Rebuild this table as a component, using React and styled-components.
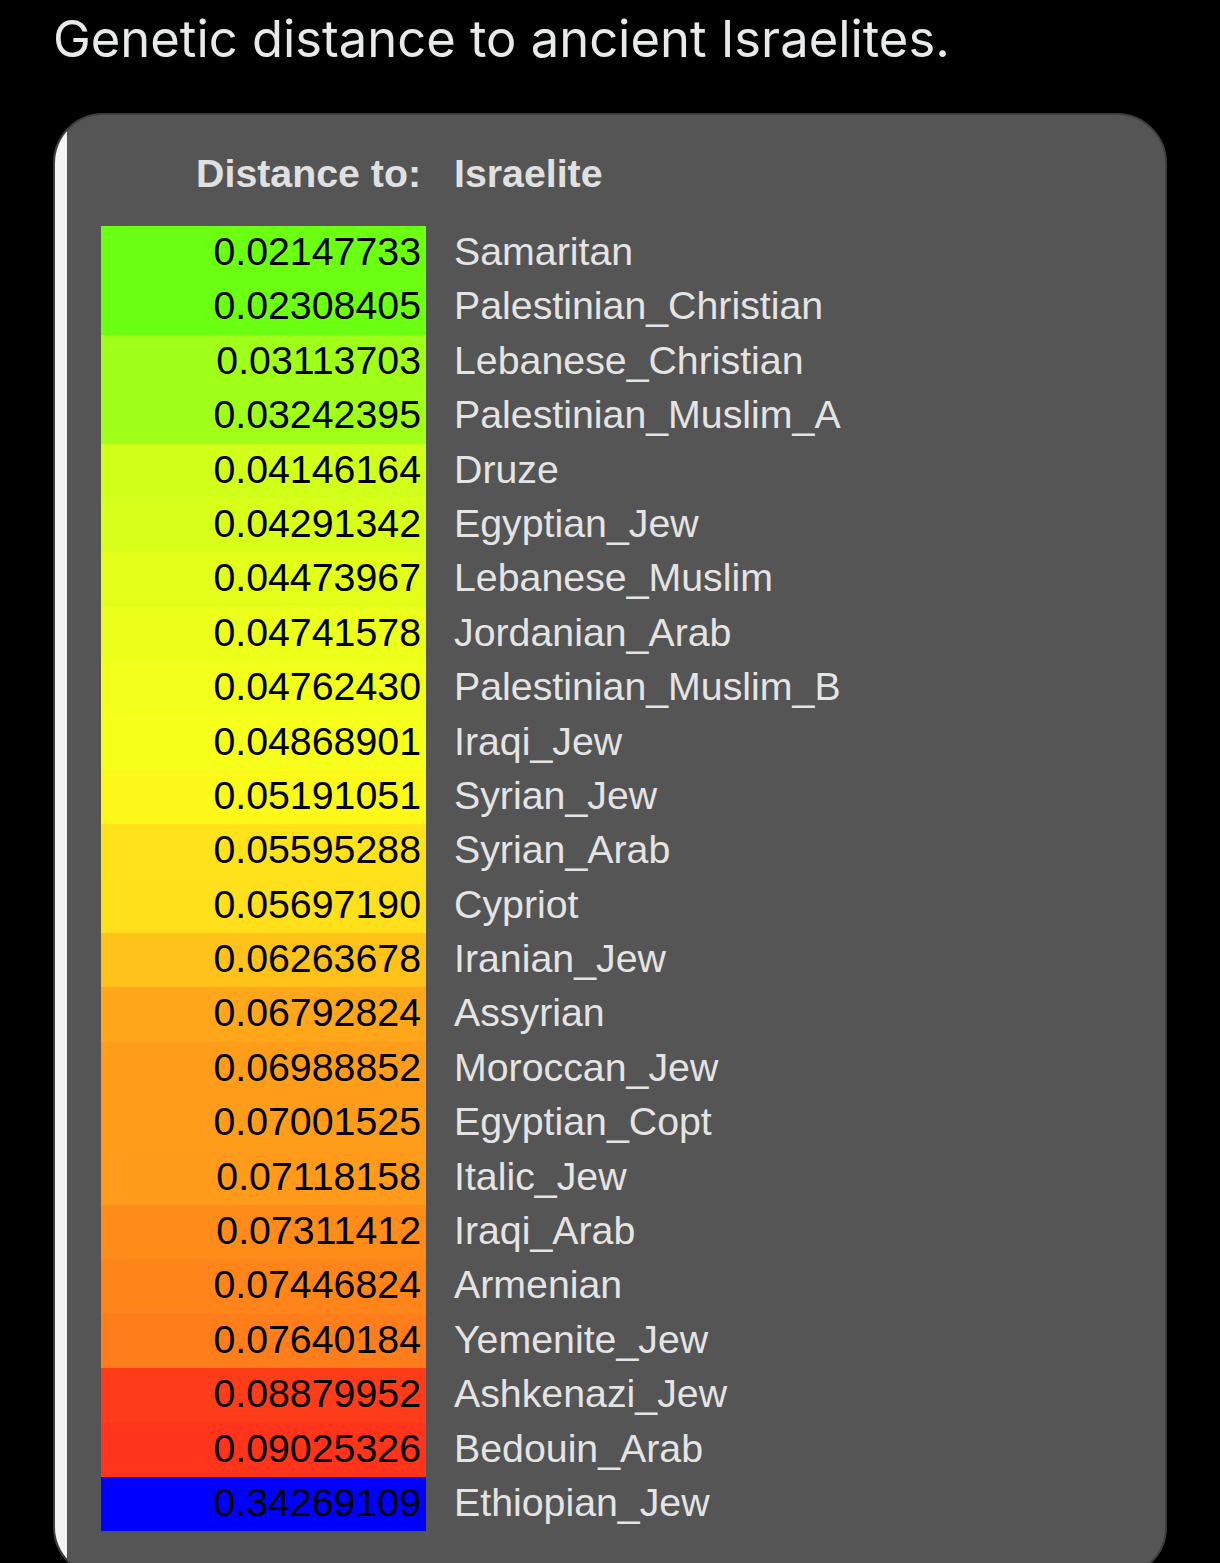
import React from 'react';
import styled, { createGlobalStyle } from 'styled-components';

const GlobalStyle = createGlobalStyle`
  html, body { margin: 0; padding: 0; background: #000; }
  body { font-family: "Liberation Sans", Arial, sans-serif; }
`;

const rows = [
  ['0.02147733', 'Samaritan', '#6bff12'],
  ['0.02308405', 'Palestinian_Christian', '#6bff12'],
  ['0.03113703', 'Lebanese_Christian', '#9fff19'],
  ['0.03242395', 'Palestinian_Muslim_A', '#9fff19'],
  ['0.04146164', 'Druze', '#d0ff1a'],
  ['0.04291342', 'Egyptian_Jew', '#d8ff1a'],
  ['0.04473967', 'Lebanese_Muslim', '#e2ff1a'],
  ['0.04741578', 'Jordanian_Arab', '#ecff1a'],
  ['0.04762430', 'Palestinian_Muslim_B', '#f2ff1a'],
  ['0.04868901', 'Iraqi_Jew', '#f6ff1a'],
  ['0.05191051', 'Syrian_Jew', '#fbf81a'],
  ['0.05595288', 'Syrian_Arab', '#ffe21a'],
  ['0.05697190', 'Cypriot', '#ffe01a'],
  ['0.06263678', 'Iranian_Jew', '#ffc21a'],
  ['0.06792824', 'Assyrian', '#ffa61a'],
  ['0.06988852', 'Moroccan_Jew', '#ff9c1a'],
  ['0.07001525', 'Egyptian_Copt', '#ff9c1a'],
  ['0.07118158', 'Italic_Jew', '#ff9a1a'],
  ['0.07311412', 'Iraqi_Arab', '#ff8b1a'],
  ['0.07446824', 'Armenian', '#ff851a'],
  ['0.07640184', 'Yemenite_Jew', '#ff7d1a'],
  ['0.08879952', 'Ashkenazi_Jew', '#ff3c1a'],
  ['0.09025326', 'Bedouin_Arab', '#ff341a'],
  ['0.34269109', 'Ethiopian_Jew', '#0000ff'],
];

const Page = styled.div`
  padding: 0 53px 0 53px;
  width: 1114px;
`;

const Title = styled.h1`
  margin: 0;
  padding-top: 9px;
  height: 113px;
  box-sizing: border-box;
  font-family: Inter, "Noto Sans", sans-serif;
  font-weight: 400;
  font-size: 50.7px;
  line-height: 60px;
  color: #e7e9ea;
`;

const Card = styled.div`
  display: flex;
  height: 1460px;
  border: 2px solid #3b3f43;
  border-radius: 50px;
  overflow: hidden;
  background: #555555;
`;

const Strip = styled.div`
  width: 12px;
  flex-shrink: 0;
  background: #f4f4f4;
`;

const Table = styled.div`
  display: grid;
  grid-template-columns: 325px 1fr;
  column-gap: 28px;
  align-content: start;
  padding: 33px 0 0 34px;
  flex: 1;
`;

const HeadCell = styled.div`
  font-weight: 700;
  font-size: 39.3px;
  line-height: 50px;
  color: #e0e0e0;
  text-align: ${p => (p.right ? 'right' : 'left')};
  padding-right: ${p => (p.right ? '5px' : '0')};
  margin-bottom: 28px;
`;

const Value = styled.div`
  background: ${p => p.bg};
  color: #000;
  font-size: 39.3px;
  line-height: 50px;
  height: 54.4px;
  box-sizing: border-box;
  padding-bottom: 4.4px;
  padding-right: 5px;
  text-align: right;
`;

const Name = styled.div`
  color: #e4e4e4;
  font-size: 39.3px;
  line-height: 50px;
  height: 54.4px;
`;

export default function App() {
  return (
    <>
      <GlobalStyle />
      <Page>
        <Title>Genetic distance to ancient Israelites.</Title>
        <Card>
          <Strip />
          <Table>
            <HeadCell right>Distance to:</HeadCell>
            <HeadCell>Israelite</HeadCell>
            {rows.map(([v, n, c]) => (
              <React.Fragment key={n}>
                <Value bg={c}>{v}</Value>
                <Name>{n}</Name>
              </React.Fragment>
            ))}
          </Table>
        </Card>
      </Page>
    </>
  );
}
